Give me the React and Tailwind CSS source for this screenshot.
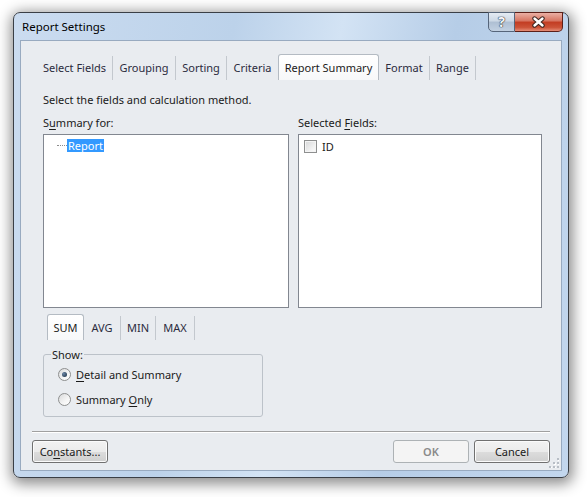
import React from 'react';

const tabs = [
  { label: 'Select Fields', cls: 'w-[76px] h-[24px] border-r border-[#c3c8ce]' },
  { label: 'Grouping', cls: 'w-[63px] h-[24px] border-r border-[#c3c8ce]' },
  { label: 'Sorting', cls: 'w-[51px] h-[24px] border-r border-[#c3c8ce]' },
  { label: 'Criteria', cls: 'w-[51px] h-[24px]' },
  { label: 'Report Summary', active: true, cls: 'w-[101px] h-[26px]' },
  { label: 'Format', cls: 'w-[51px] h-[24px] border-r border-[#c3c8ce]' },
  { label: 'Range', cls: 'w-[46px] h-[24px] border-r border-[#c3c8ce]' },
];

const calcTabs = [
  { label: 'SUM', active: true, cls: 'w-[37px] h-[26px]' },
  { label: 'AVG', cls: 'w-[37px] h-[24px] border-r border-[#c3c8ce]' },
  { label: 'MIN', cls: 'w-[35px] h-[24px] border-r border-[#c3c8ce]' },
  { label: 'MAX', cls: 'w-[39px] h-[24px] border-r border-[#c3c8ce]' },
];

function Tab({ label, active, cls }) {
  // selected tab is lighter and a bit taller, open at the bottom
  const look = active
    ? 'border-l border-t border-r border-[#b4bbc3] rounded-t-[3px] bg-[linear-gradient(#ffffff,#f7f8f9)] text-[#1a1a1a]'
    : 'text-[#2b2b3d]';
  return (
    <div className={`flex items-center justify-center pb-[1px] ${cls} ${look}`}>
      {label}
    </div>
  );
}

function Radio({ checked }) {
  return (
    <div className="w-[13px] h-[13px] rounded-full border border-[#8e8f8f] bg-[linear-gradient(135deg,#d9dadb,#f5f5f5_60%,#ffffff)] flex items-center justify-center shrink-0">
      {checked && (
        <div className="w-[5px] h-[5px] rounded-full bg-[radial-gradient(circle_at_35%_35%,#6a86a6,#1a2b3d)]" />
      )}
    </div>
  );
}

function WinButton({ children, disabled, className = '' }) {
  const look = disabled
    ? 'border-[#adb2b5] bg-[#f4f4f4] text-[#8a8a8a] font-semibold'
    : 'border-[#707070] bg-[linear-gradient(#f2f2f2,#ebebeb_50%,#dddddd_50%,#cfcfcf)] shadow-[inset_0_0_0_1px_#fbfbfb] text-[#1a1a1a]';
  return (
    <div className={`w-[76px] h-[23px] rounded-[3px] border flex items-center justify-center ${look} ${className}`}>
      {children}
    </div>
  );
}

export default function App() {
  return (
    <div className="w-[587px] h-[497px] bg-white pl-[13px] pt-[12px] font-['Noto_Sans','Liberation_Sans',sans-serif] text-[11px] leading-[15px] text-[#1a1a1a]">
      {/* window frame */}
      <div className="w-[556px] h-[466px] rounded-[7px] border border-[#3a3f46] shadow-[1px_3px_14px_3px_rgba(0,0,0,0.45)] bg-[linear-gradient(100deg,#cbdcf0_0%,#bcd2ea_35%,#d3e3f4_52%,#b6cde7_70%,#c3d7ee_100%)] flex flex-col">
        {/* title bar */}
        <div className="h-[27px] flex shrink-0">
          <div className="flex-1 pl-[8px] pt-[6px] text-[11.5px] text-black">Report Settings</div>
          <div className="flex -mt-px mr-[5px] self-start">
            <div className="w-[27px] h-[20px] border border-[#56657a] rounded-bl-[5px] bg-[linear-gradient(#e4ebf3,#ccd8e5_45%,#aebfd3_50%,#c2d1e2)] flex items-center justify-center text-[14px] font-bold leading-none text-[#f4f6f8] [text-shadow:0_0_1px_#2f3744,0_0_1px_#2f3744,0_0_1px_#2f3744]">
              ?
            </div>
            <div className="w-[48px] h-[20px] border border-l-0 border-[#5c1f18] rounded-br-[5px] bg-[linear-gradient(#eab0a4,#d6735f_45%,#c23c22_50%,#cc5338_80%,#e58e78)] flex items-center justify-center">
              <svg width="15" height="12" viewBox="0 0 15 12">
                <path d="M3.5 2.5 L11.5 9.5 M11.5 2.5 L3.5 9.5" stroke="#3b2520" strokeWidth="4.4" strokeLinecap="round" />
                <path d="M3.5 2.5 L11.5 9.5 M11.5 2.5 L3.5 9.5" stroke="#ffffff" strokeWidth="2.4" strokeLinecap="round" />
              </svg>
            </div>
          </div>
        </div>

        {/* client area */}
        <div className="mx-[6px] mb-[6px] flex-1 border border-[#98aac0] bg-[#e9ecf0] flex flex-col relative">
          {/* tabs */}
          <div className="flex items-end mt-[13px] ml-[16px]">
            {tabs.map((t) => (
              <Tab key={t.label} {...t} />
            ))}
          </div>

          <div className="mt-[12px] ml-[22px]">Select the fields and calculation method.</div>

          <div className="flex gap-[9px] ml-[22px] mt-[8px]">
            <div className="w-[246px] flex flex-col">
              <div>
                S<span className="underline underline-offset-[2px]">u</span>mmary for:
              </div>
              <div className="mt-[4px] h-[174px] border border-[#828790] bg-white pt-[4px] pl-[13px]">
                <div className="flex items-center">
                  <div className="w-[10px] border-t border-dotted border-[#8c8c8c]" />
                  <span className="bg-[#3399ff] text-white px-[1px] leading-[13px]">Report</span>
                </div>
              </div>
            </div>
            <div className="w-[244px] flex flex-col">
              <div>
                Selected <span className="underline underline-offset-[2px]">F</span>ields:
              </div>
              <div className="mt-[4px] h-[174px] border border-[#828790] bg-white pt-[4px] pl-[5px]">
                <div className="flex items-center gap-[5px]">
                  <div className="w-[13px] h-[13px] border border-[#8e8f8f] bg-[linear-gradient(135deg,#d6d7d8,#f3f3f3_70%,#fbfbfb)] shadow-[inset_0_0_0_1px_#f4f4f4]" />
                  <span>ID</span>
                </div>
              </div>
            </div>
          </div>

          {/* calculation tabs */}
          <div className="flex items-end mt-[6px] ml-[26px]">
            {calcTabs.map((t) => (
              <Tab key={t.label} {...t} />
            ))}
          </div>

          {/* Show group */}
          <fieldset className="mt-[7px] ml-[22px] w-[220px] border border-[#bcc2c9] rounded-[3px] pl-[7px] pb-[9px]">
            <legend className="px-[1px]">Show:</legend>
            <div className="flex items-center gap-[5px] h-[16px] mt-[4px] ml-[7px]">
              <Radio checked />
              <span>
                <span className="underline underline-offset-[2px]">D</span>etail and Summary
              </span>
            </div>
            <div className="flex items-center gap-[5px] h-[16px] mt-[9px] ml-[7px]">
              <Radio />
              <span>
                Summary <span className="underline underline-offset-[2px]">O</span>nly
              </span>
            </div>
          </fieldset>

          <div className="flex-1" />

          {/* separator and buttons */}
          <div className="mx-[11px] h-[2px] border-t border-[#a0a0a0] border-b border-b-white" />
          <div className="flex items-center mt-[7px] mb-[7px] px-[11px]">
            <WinButton>
              <span>
                Co<span className="underline underline-offset-[2px]">n</span>stants...
              </span>
            </WinButton>
            <div className="flex-1" />
            <WinButton disabled>OK</WinButton>
            <WinButton className="ml-[5px]">Cancel</WinButton>
          </div>

          {/* size grip */}
          <svg className="absolute right-[2px] bottom-[2px]" width="10" height="10" viewBox="0 0 10 10">
            {[
              [8, 0], [8, 4], [4, 4], [8, 8], [4, 8], [0, 8],
            ].map(([x, y]) => (
              <g key={`${x}-${y}`}>
                <rect x={x + 1} y={y + 1} width="2" height="2" fill="#ffffff" />
                <rect x={x} y={y} width="2" height="2" fill="#b8bec6" />
              </g>
            ))}
          </svg>
        </div>
      </div>
    </div>
  );
}
